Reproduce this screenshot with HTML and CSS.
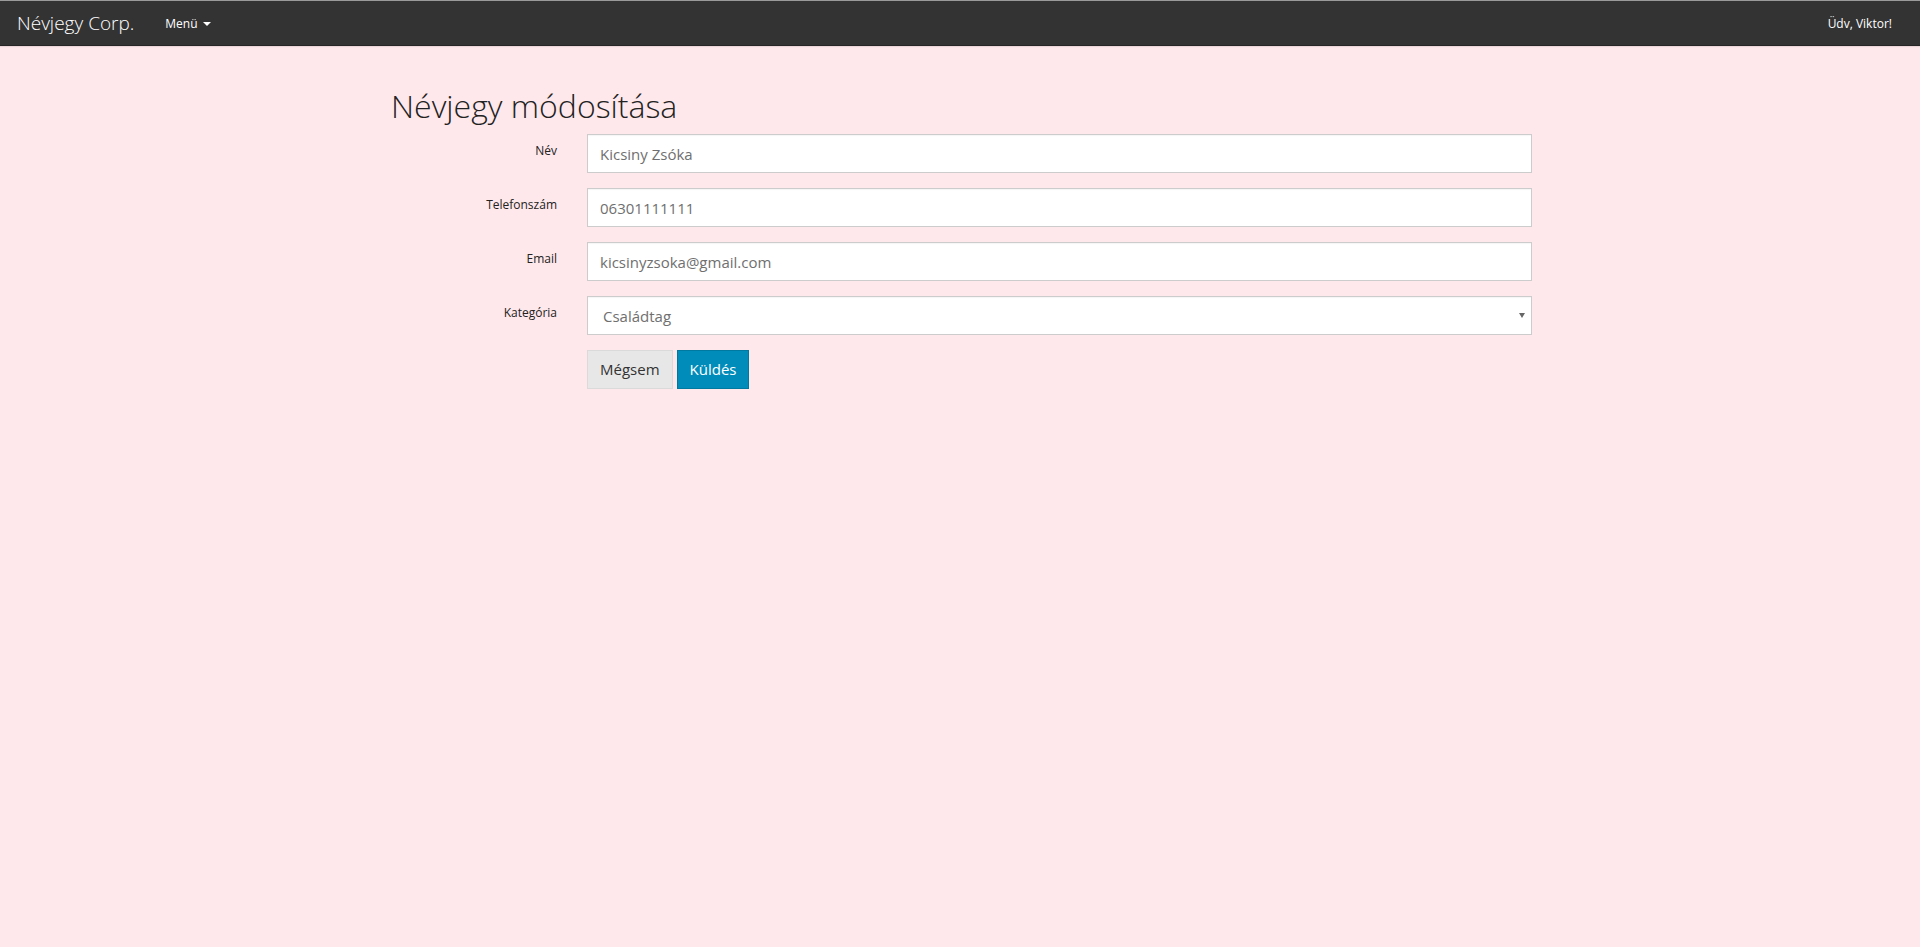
FILE: index.html
```html
<!DOCTYPE html>
<html lang="hu">
<head>
<meta charset="utf-8">
<title>Névjegy módosítása</title>
<link rel="stylesheet" href="styles.css">
</head>
<body>
<nav class="navbar">
  <div class="nav-left">
    <a class="brand" href="#">Névjegy Corp.</a>
    <a class="menu" href="#">Menü <span class="caret"></span></a>
  </div>
  <span class="greet">Üdv, Viktor!</span>
</nav>
<main class="container">
  <h2 class="title">Névjegy módosítása</h2>
  <form class="form">
    <label class="label" for="nev">Név</label>
    <input class="control" id="nev" type="text" value="Kicsiny Zsóka">
    <label class="label" for="tel">Telefonszám</label>
    <input class="control" id="tel" type="text" value="06301111111">
    <label class="label" for="email">Email</label>
    <input class="control" id="email" type="text" value="kicsinyzsoka@gmail.com">
    <label class="label" for="kat">Kategória</label>
    <div class="select-wrap">
      <select class="control select" id="kat">
        <option>Családtag</option>
        <option>Barát</option>
        <option>Munkatárs</option>
      </select>
    </div>
    <div class="actions">
      <button type="button" class="btn btn-default">Mégsem</button>
      <button type="submit" class="btn btn-primary">Küldés</button>
    </div>
  </form>
</main>
</body>
</html>
```

FILE: styles.css
```css
html, body {
  margin: 0;
  padding: 0;
}
body {
  background: #ffe8eb;
  font-family: "Open Sans", "Liberation Sans", sans-serif;
  font-size: 15px;
  line-height: 1.428571;
  color: #222;
  min-height: 947px;
}
.navbar {
  box-sizing: border-box;
  height: 46px;
  background: #333333;
  border-top: 1px solid #9a9a9a;
  border-bottom: 1px solid #262626;
  box-shadow: 0 1px 1px rgba(0,0,0,0.08);
  display: flex;
  align-items: center;
  justify-content: space-between;
  padding: 0 28px 0 17px;
}
.nav-left {
  display: flex;
  align-items: center;
}
.brand {
  color: #fff;
  font-size: 19px;
  font-weight: 300;
  text-decoration: none;
  line-height: 22px;
  margin-right: 31px;
}
.menu {
  color: #fff;
  font-size: 12px;
  text-decoration: none;
  display: flex;
  align-items: center;
  gap: 5px;
  margin-top: 1px;
}
.caret {
  display: inline-block;
  width: 0;
  height: 0;
  border-top: 4px solid #fff;
  border-left: 4px solid transparent;
  border-right: 4px solid transparent;
  margin-top: 1px;
}
.greet {
  color: #fff;
  font-size: 12px;
  margin-top: 1px;
}
.container {
  box-sizing: border-box;
  width: 1170px;
  margin-left: calc(50% - 583px);
  padding: 0 15px;
}
.title {
  font-size: 32px;
  font-weight: 300;
  line-height: 1.1;
  color: #222;
  margin: 42px 0 11px -1px;
}
.form {
  display: grid;
  grid-template-columns: 165px 945px;
  column-gap: 30px;
  row-gap: 15px;
}
.label {
  font-size: 12px;
  color: #222;
  text-align: right;
  padding-top: 8px;
  line-height: 17px;
}
.control {
  box-sizing: border-box;
  width: 945px;
  height: 39px;
  padding: 8px 12px;
  border: 1px solid #cccccc;
  border-radius: 0;
  background: #fff;
  color: #6f6f6f;
  font-family: "Open Sans", "Liberation Sans", sans-serif;
  font-size: 15px;
  margin: 0;
  box-shadow: inset 0 1px 1px rgba(0,0,0,0.04);
}
.select-wrap {
  position: relative;
}
.select {
  -webkit-appearance: none;
  appearance: none;
  padding-left: 15px;
}
.select-wrap::after {
  content: "";
  position: absolute;
  right: 7px;
  top: 17px;
  width: 0;
  height: 0;
  border-top: 5px solid #666;
  border-left: 3px solid transparent;
  border-right: 3px solid transparent;
}
.actions {
  grid-column: 2;
  display: flex;
  gap: 4px;
}
.btn {
  box-sizing: border-box;
  height: 39px;
  padding: 8px 12px;
  font-family: "Open Sans", "Liberation Sans", sans-serif;
  font-size: 15px;
  line-height: 21px;
  border-radius: 0;
  cursor: pointer;
}
.btn-default {
  background: #e7e7e7;
  border: 1px solid #dadada;
  color: #333;
}
.btn-primary {
  background: #008cba;
  border: 1px solid #0079a1;
  color: #fff;
}
```
